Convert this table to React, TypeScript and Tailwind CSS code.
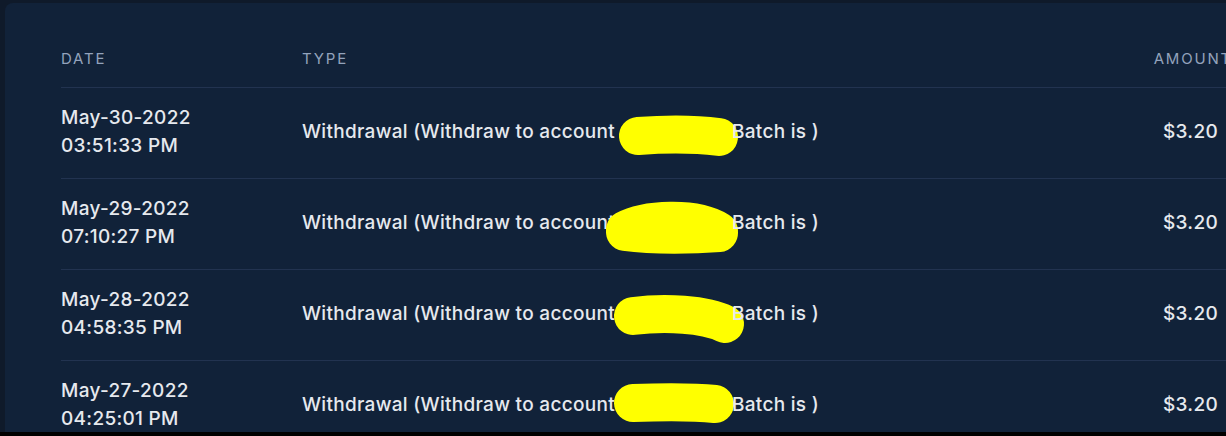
import React from "react";

type Row = {
  date: string;
  time: string;
  amount: string;
  blob: string;
};

// yellow scribbles that hide the account number, coords relative to the gap
const rows: Row[] = [
  { date: "May-30-2022", time: "03:51:33 PM", amount: "$3.20", blob: "M43 46 C70 44 100 44 124 47" },
  { date: "May-29-2022", time: "07:10:27 PM", amount: "$3.20", blob: "M30 49 C50 38 100 35 124 50 M30 51 C60 55 100 54 124 52" },
  { date: "May-28-2022", time: "04:58:35 PM", amount: "$3.20", blob: "M38 44 C70 40 110 42 130 52" },
  { date: "May-27-2022", time: "04:25:01 PM", amount: "$3.20", blob: "M38 40 C70 39 100 39 120 41" },
];

const App: React.FC = () => {
  return (
    <div className="h-[436px] w-[1226px] overflow-hidden bg-black" style={{ fontFamily: "Inter, 'Noto Sans', sans-serif" }}>
      <div className="h-[432px] bg-[#0f1a2a] pl-[5px] pt-[3px]">
        <div className="h-full w-[1300px] rounded-tl-lg bg-[#112239] pl-[56px] pt-[46px]">
          <div className="w-[1171px]">
            {/* header */}
            <div className="flex border-b border-[#223350] pb-[18px] text-[15px] uppercase leading-5 tracking-[0.12em] text-[#93a3bc]">
              <div className="w-[241px]">Date</div>
              <div className="flex-1">Type</div>
              <div className="text-right">Amount</div>
            </div>

            {rows.map((r, i) => (
              <div key={i} className="flex items-center border-b border-[#223350] pb-[18px] pt-[16px] text-[19px] font-medium leading-7 tracking-[0.3px] text-[#e6e9ee]">
                <div className="w-[241px]">
                  <div>{r.date}</div>
                  <div>{r.time}</div>
                </div>
                <div className="flex flex-1 items-center whitespace-nowrap">
                  <span>Withdrawal (Withdraw to account</span>
                  <span className="relative h-7 w-[117px]">
                    <svg className="absolute left-[-20px] top-[-28px] h-[84px] w-[170px]" viewBox="0 0 170 84" fill="none">
                      <path d={r.blob} stroke="#ffff00" strokeWidth="38" strokeLinecap="round" strokeLinejoin="round" />
                    </svg>
                  </span>
                  <span className="relative">Batch is )</span>
                </div>
                <div className="pr-[14px] text-right">{r.amount}</div>
              </div>
            ))}
          </div>
        </div>
      </div>
    </div>
  );
};

export default App;
